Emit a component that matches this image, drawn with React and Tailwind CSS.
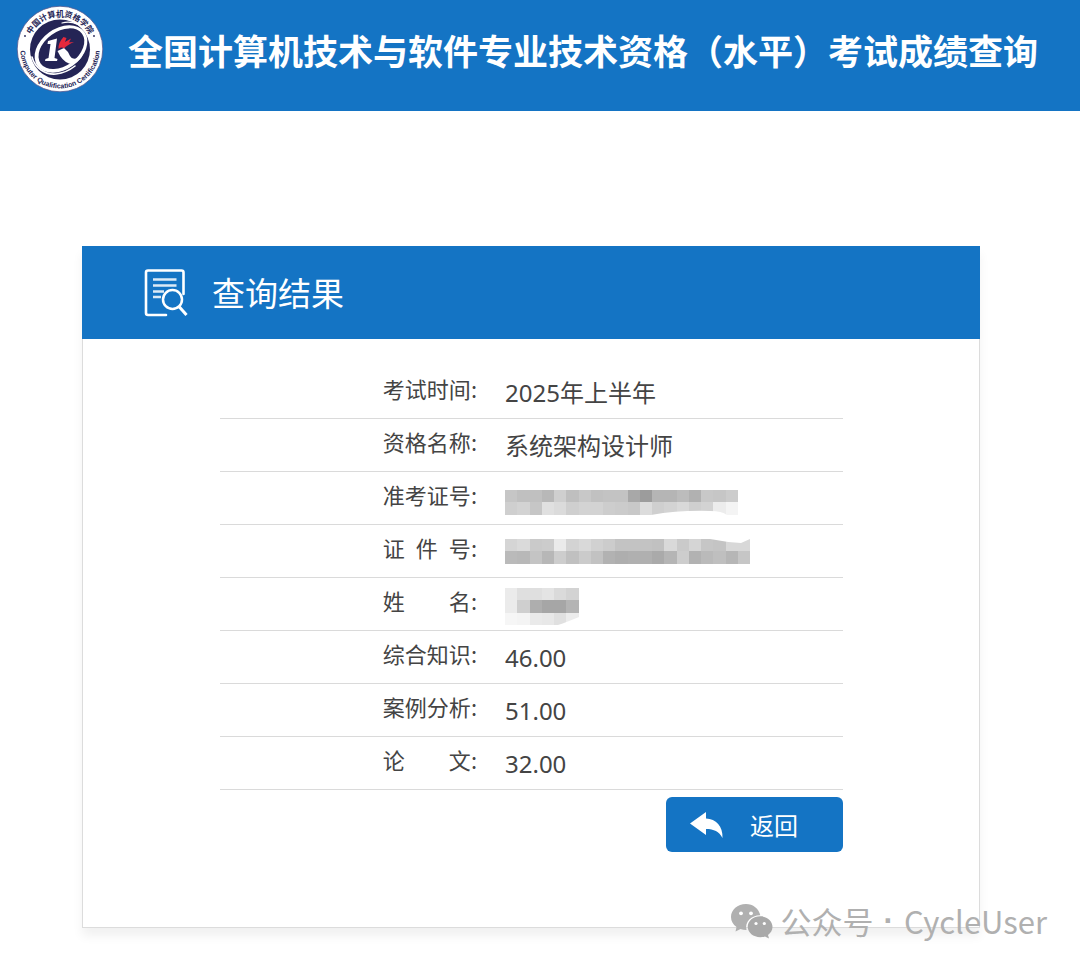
const rows = [
  { label: "考试时间", value: "2025年上半年" },
  { label: "资格名称", value: "系统架构设计师" },
  { label: "准考证号", mask: "ticket" },
  { label: "证\u2002件\u2002号", mask: "id" },
  { label: "姓\u2003\u2003名", mask: "name" },
  { label: "综合知识", value: "46.00" },
  { label: "案例分析", value: "51.00" },
  { label: "论\u2003\u2003文", value: "32.00" },
];

const masks = {
  ticket: {
    cells: [
      "c6 c0 c0 b8 cf bf c8 c1 c3 c3 a8 9c b5 b5 bc b1 c8 c6 cc",
      "cf d3 c6 e0 db cf d3 d3 cd cb c8 dc cf d3 d9 cf d3 ec f4",
    ],
    cover: "M146 25 Q175 20 205 21 Q217 21 222 25Z",
    width: 245,
    height: 25,
    className: "mt-[11px]",
  },
  id: {
    cells: [
      "d5 da ca cc ea d3 d9 d1 cc c3 c3 c3 c1 d9 ca d5 c6 c4 d8 d8",
      "ba b8 c4 b7 cd c0 cb c2 b2 ae b0 b0 aa b5 cd b2 ba bf b6 c6",
    ],
    cover: "M205 0 Q220 3 236 4 L245 0Z",
    width: 245,
    height: 25,
    className: "mt-[7px]",
  },
  name: {
    cells: ["eb df df e4 da d3", "eb cf ae a6 a6 b4", "f6 f4 ea e8 e0 ec"],
    cover: "M53 37 Q62 34 74 29 V37Z",
    width: 86,
    height: 37,
    className: "mt-[3px]",
  },
};

function Mask({ kind }) {
  const m = masks[kind];
  return (
    <svg
      width={m.width}
      height={m.height}
      viewBox={`0 0 ${m.width} ${m.height}`}
      className={m.className}
      shapeRendering="crispEdges"
      aria-hidden="true"
    >
      {m.cells.map((line, r) =>
        line.split(" ").map((c, i) => (
          <rect key={`${r}-${i}`} x={i * 12.25} y={r * 12.25} width="12.25" height="12.25" fill={`#${c}${c}${c}`} />
        ))
      )}
      <path d={m.cover} fill="#fff" shapeRendering="auto" />
    </svg>
  );
}

function Emblem() {
  return (
    <svg viewBox="0 0 88 88" className="size-[88px] shrink-0" aria-hidden="true">
      <defs>
        <path id="arcTop" d="M11.5 44 A32.5 32.5 0 0 1 76.5 44" />
        <path id="arcBottom" d="M4.6 38 A39.8 39.8 0 1 0 83.4 38" />
      </defs>
      <circle cx="44" cy="44" r="42.8" fill="#fff" stroke="#55598f" strokeWidth="0.8" />
      <circle cx="44" cy="44.500" r="30" fill="#242455" />
      <g transform="rotate(-36 45 44)">
        <ellipse cx="45" cy="44" rx="29" ry="20.500" fill="#fff" />
        <ellipse cx="45.500" cy="44" rx="25.500" ry="17" fill="#242455" />
      </g>
      <path fill="none" stroke="#fff" strokeWidth="1.600" strokeLinecap="round" d="M16 52 C19 63 29 70 40 69 C48 68 54 65 59 61" />
      <path fill="none" stroke="#fff" strokeWidth="1.200" strokeLinecap="round" d="M46 18 C56 15 68 20 73 30" />
      <path fill="#fff" d="M32 36 L41 33.500 L38.500 53 L41.500 54 L41 56 H29 L29.500 54 L32.500 53 L34.500 39 L31.500 39Z" />
      <path fill="#fff" d="M41.500 46 L48 43 Q52 46 54 51 Q57 57 67 50 Q61 60 53 58.500 Q46 56 41.500 46Z" />
      <path fill="#e5283c" d="M42.500 44 Q42 38 47.500 32 L50.500 33 L49 37 L55 33.500 L53 37.500 L58 37 Q51 40 48 43.500 Q46 41.500 42.500 44Z" />
      <circle cx="9" cy="31" r="0.9" fill="#242455" />
      <circle cx="78" cy="31" r="0.9" fill="#242455" />
      <text className="font-['Noto_Sans_CJK_SC',sans-serif] text-[8px] font-bold" fill="#242455" textAnchor="middle">
        <textPath href="#arcTop" startOffset="50%">中国计算机资格学院</textPath>
      </text>
      <text className="font-['Liberation_Sans',sans-serif] text-[7px] font-bold" fill="#242455" textAnchor="middle">
        <textPath href="#arcBottom" startOffset="50%">Computer Qualification Certification</textPath>
      </text>
    </svg>
  );
}

function ResultIcon() {
  return (
    <svg viewBox="0 0 44 48" className="h-12 w-11 shrink-0" fill="none" stroke="#fff" aria-hidden="true">
      <path d="M22 46 H4 Q2 46 2 44 V3.500 Q2 1.500 4 1.500 H37.500 Q39.500 1.500 39.500 3.500 V25" strokeWidth="2.600" strokeLinecap="round" />
      <path d="M9 10.500 H32.500 M9 16.500 H32.500 M9 22.500 H20 M9 28 H17" strokeWidth="2.600" strokeOpacity="0.850" />
      <circle cx="28.500" cy="30.500" r="9.500" strokeWidth="2.500" />
      <path d="M35 37.500 L42.500 46" strokeWidth="3" />
    </svg>
  );
}

function ChatIcon() {
  return (
    <svg viewBox="0 0 42 35" className="h-[35px] w-[42px]" aria-hidden="true">
      <path
        fill="#b0b0b0"
        d="M15 0 C6.500 0 0 5.700 0 13 C0 17 2 20.500 5.500 23 L4.500 27.500 L9.500 25 C11.500 25.600 13.500 26 15.500 25.900 C13.500 18 20.500 11.200 29.300 11.300 C27.900 4.700 22 0 15 0Z"
      />
      <path
        fill="#a9a9a9"
        d="M29.300 12.300 C22.300 12.300 16.700 17 16.700 22.800 C16.700 28.600 22.300 33.200 29.300 33.200 C31 33.200 32.600 32.900 34 32.400 L38 34.500 L37 31 C39.700 29 41.500 26.200 41.500 22.800 C41.500 17 36.200 12.300 29.300 12.300Z"
      />
      <g fill="#fff">
        <circle cx="10" cy="9.300" r="1.900" />
        <circle cx="20" cy="9.300" r="1.900" />
        <circle cx="25" cy="19.500" r="1.600" />
        <circle cx="33.300" cy="19.500" r="1.600" />
      </g>
    </svg>
  );
}

export default function App() {
  return (
    <div className="relative pb-[38px] font-['Noto_Sans_CJK_SC',sans-serif] text-[#444]">
      <header className="flex h-[111px] items-start gap-6 bg-[#1474c4] pl-4 pt-[5px]">
        <Emblem />
        <h1 className="whitespace-nowrap pt-[19px] text-[35px] font-bold leading-[52px] text-white">
          全国计算机技术与软件专业技术资格（水平）考试成绩查询
        </h1>
      </header>

      <main className="ml-[82px] mr-[100px] mt-[135px] bg-white shadow-[0_8px_10px_rgba(0,0,0,0.06)]">
        <div className="flex h-[93px] items-center gap-6 bg-[#1474c4] pl-[62px]">
          <ResultIcon />
          <h2 className="pb-[2px] text-[33px] leading-[48px] text-white">查询结果</h2>
        </div>
        <section className="border border-t-0 border-[#dcdcdc] pb-[75px] pl-[137px] pr-[136px] pt-[27px]">
          <table className="w-full table-fixed border-separate border-spacing-0">
            <tbody>
              {rows.map((row) => (
                <tr key={row.label}>
                  <th
                    scope="row"
                    className="h-[53px] w-[273px] whitespace-nowrap border-b border-[#dadada] py-0 pl-0 pr-4 text-right align-top text-[22px] font-normal leading-[44px]"
                  >
                    {row.label}:
                  </th>
                  <td className="h-[53px] border-b border-[#dadada] pb-0 pl-3 pr-0 pt-[7px] align-top font-['Noto_Sans','Noto_Sans_CJK_SC',sans-serif] text-[24px] leading-[40px]">
                    {row.value ?? <Mask kind={row.mask} />}
                  </td>
                </tr>
              ))}
            </tbody>
          </table>
          <div className="flex justify-end pt-[7px]">
            <button type="button" className="flex h-[55px] w-[177px] items-center gap-[27px] rounded-md bg-[#1474c4] pl-6 text-[24px] text-white">
              <svg viewBox="0 0 33 26" className="h-[26px] w-[33px]" fill="#fff" aria-hidden="true">
                <path d="M0 11.500 L16 0 V6.500 C26 7 33 14 32.500 26 C29 19.500 24 17 16 17 V23Z" />
              </svg>
              <span>返回</span>
            </button>
          </div>
        </section>
      </main>

      <div className="absolute bottom-[21px] right-[33px] flex items-center gap-2 whitespace-nowrap text-[31px] leading-[48px] text-[#b0b0b0]">
        <ChatIcon />
        <span className="flex gap-[10px]">
          <span>公众号</span>
          <span className="font-['Liberation_Sans',sans-serif] font-bold">·</span>
          <span>CycleUser</span>
        </span>
      </div>
    </div>
  );
}
